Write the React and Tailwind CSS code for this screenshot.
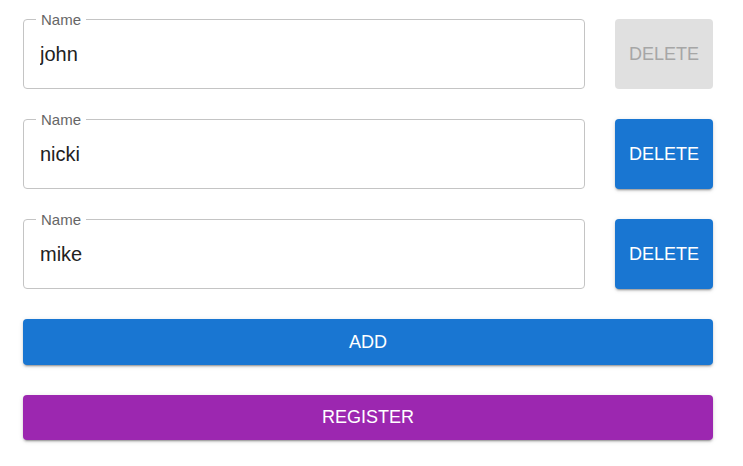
import React, { useState } from 'react';

const font = { fontFamily: '"Liberation Sans", Arial, sans-serif' };

const NameField = ({ value, onChange }) => (
  <div className="relative flex-1 h-[70px] border border-[#c4c4c4] rounded-[4px] flex items-center">
    <span className="absolute left-[12px] -top-[9px] px-[5px] bg-white text-[15px] leading-[17px] text-[#666666]">
      Name
    </span>
    <input
      value={value}
      onChange={(e) => onChange(e.target.value)}
      className="w-full h-full bg-transparent outline-none pl-[16px] pr-[14px] text-[20px] text-[#212121]"
      style={font}
    />
  </div>
);

export default function App() {
  const [names, setNames] = useState(['john', 'nicki', 'mike']);

  const update = (i, v) => setNames((prev) => prev.map((n, j) => (j === i ? v : n)));
  const remove = (i) => setNames((prev) => prev.filter((_, j) => j !== i));

  return (
    <div className="bg-white min-h-[466px] pt-[19px] pl-[23px] pr-[30px] flex flex-col gap-[30px]" style={font}>
      {names.map((n, i) => (
        <div key={i} className="flex items-center gap-[30px]">
          <NameField value={n} onChange={(v) => update(i, v)} />
          {i === 0 ? (
            <button
              disabled
              className="w-[98px] h-[70px] rounded-[4px] bg-[#e0e0e0] text-[#a6a6a6] text-[18px] uppercase"
            >
              Delete
            </button>
          ) : (
            <button
              onClick={() => remove(i)}
              className="w-[98px] h-[70px] rounded-[4px] bg-[#1976d2] text-white text-[18px] uppercase shadow-[0_3px_1px_-2px_rgba(0,0,0,0.2),0_2px_2px_0_rgba(0,0,0,0.14),0_1px_5px_0_rgba(0,0,0,0.12)]"
            >
              Delete
            </button>
          )}
        </div>
      ))}
      <button
        onClick={() => setNames((prev) => [...prev, ''])}
        className="h-[46px] rounded-[4px] bg-[#1976d2] text-white text-[18px] uppercase shadow-[0_3px_1px_-2px_rgba(0,0,0,0.2),0_2px_2px_0_rgba(0,0,0,0.14),0_1px_5px_0_rgba(0,0,0,0.12)]"
      >
        Add
      </button>
      <button className="h-[45px] rounded-[4px] bg-[#9c27b0] text-white text-[18px] uppercase shadow-[0_3px_1px_-2px_rgba(0,0,0,0.2),0_2px_2px_0_rgba(0,0,0,0.14),0_1px_5px_0_rgba(0,0,0,0.12)]">
        Register
      </button>
    </div>
  );
}
